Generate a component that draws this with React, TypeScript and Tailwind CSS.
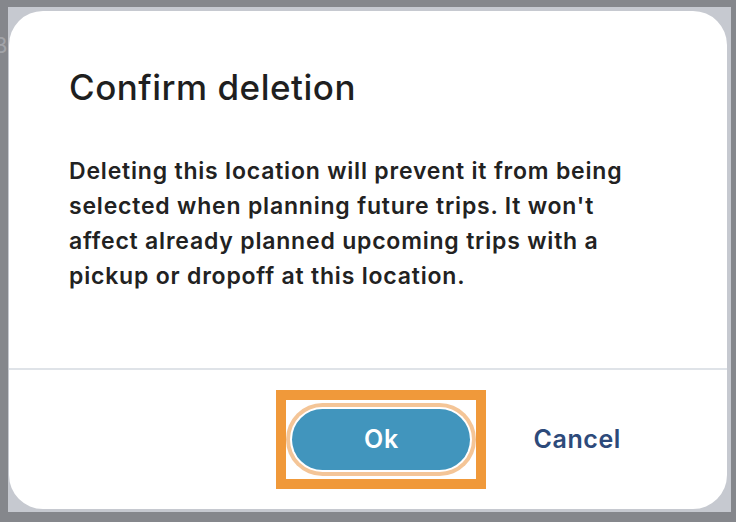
export default function App() {
  return (
    <div className="relative w-[736px] h-[522px] overflow-hidden bg-[#85878c] pt-[7px] pl-[8px] pr-[5px] pb-[10px] font-['Inter',sans-serif]">
      <span className="absolute left-[-7px] top-[34px] text-[22px] leading-none text-[#a2a4a9]">B</span>
      <div className="h-full bg-[#c6c9d0] pt-[4px] pl-[1px] pr-[4px] pb-[3px]">
        <div className="flex h-full flex-col rounded-[34px] bg-white">
          <h2 className="px-[60px] pt-[52px] text-[35px] font-medium leading-[48px] tracking-[0.5px] text-[#1f1f1f]">
            Confirm deletion
          </h2>
          <p className="mt-[43px] w-[700px] px-[60px] text-[23px] font-semibold leading-[35px] tracking-[0.8px] text-[#222222]">
            Deleting this location will prevent it from being selected when planning future trips. It won't affect already planned upcoming trips with a pickup or dropoff at this location.
          </p>
          <div className="mt-auto border-t-2 border-[#dfe3e8]">
            <div className="flex items-center justify-end gap-[47px] pt-[20px] pb-[20px] pr-[106px]">
              <div className="flex h-[99px] w-[210px] items-center justify-center border-[10px] border-[#f0993a] bg-white">
                <button className="flex h-[61px] w-[178px] items-center justify-center rounded-full bg-[#4195bd] text-[25px] font-semibold tracking-[0.6px] text-white shadow-[0_0_0_2px_#ffffff,0_0_0_6px_#f4c597]">
                  Ok
                </button>
              </div>
              <button className="text-[25px] font-semibold tracking-[0.6px] text-[#2d4a7a]">Cancel</button>
            </div>
          </div>
        </div>
      </div>
    </div>
  )
}
